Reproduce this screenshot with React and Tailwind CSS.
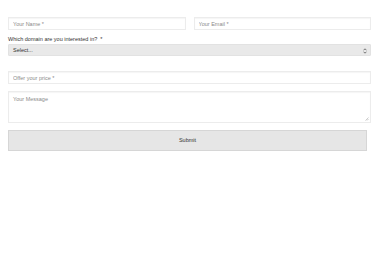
import React from 'react';

const inputCls =
  'block w-full h-[13px] px-[4px] bg-white border border-[#ececec] shadow-[inset_0_1px_1px_rgba(0,0,0,0.04)] text-[5.5px] text-[#333] placeholder-[#8a8a8a] outline-none';

export default function App() {
  return (
    <div className="w-[380px] h-[260px] bg-white font-['Liberation_Sans',Arial,sans-serif]">
      <form className="pt-[17px] pl-[8px] w-[371px]">
        {/* Name / Email row */}
        <div className="grid grid-cols-2 gap-[8px]">
          <input className={inputCls} placeholder="Your Name *" />
          <input className={inputCls} placeholder="Your Email *" />
        </div>

        {/* Domain select */}
        <label className="block mt-[6px] text-[5.5px] leading-[7px] text-[#333]">
          Which domain are you interested in?&nbsp; *
        </label>
        <div className="relative mt-[1px] h-[12px] bg-[#e9e9e9] border border-[#e2e2e2] rounded-[1px] flex items-center px-[4px]">
          <span className="text-[5.5px] text-[#333]">Select...</span>
          <svg className="absolute right-[3px] top-[2.5px]" width="4" height="6" viewBox="0 0 4 6">
            <path d="M0.5 2.3 L2 0.8 L3.5 2.3" fill="none" stroke="#555" strokeWidth="0.8" />
            <path d="M0.5 3.7 L2 5.2 L3.5 3.7" fill="none" stroke="#555" strokeWidth="0.8" />
          </svg>
        </div>

        {/* Offer */}
        <input className={inputCls + ' mt-[15px]'} placeholder="Offer your price *" />

        {/* Message */}
        <div className="relative mt-[7px]">
          <textarea
            className="block w-full h-[32px] px-[4px] pt-[3px] bg-white border border-[#ececec] shadow-[inset_0_1px_1px_rgba(0,0,0,0.04)] text-[5.5px] text-[#333] placeholder-[#8a8a8a] outline-none resize-none"
            placeholder="Your Message"
          />
          <svg className="absolute right-[2px] bottom-[2px]" width="4" height="4" viewBox="0 0 4 4">
            <path d="M0.5 3.5 L3.5 0.5 M2 3.5 L3.5 2" stroke="#aaa" strokeWidth="0.6" />
          </svg>
        </div>

        {/* Submit */}
        <button
          type="button"
          className="block mt-[7px] w-[359px] h-[21px] bg-[#e6e6e6] border border-[#d6d6d6] text-[5.5px] text-[#333]"
        >
          Submit
        </button>
      </form>
    </div>
  );
}
